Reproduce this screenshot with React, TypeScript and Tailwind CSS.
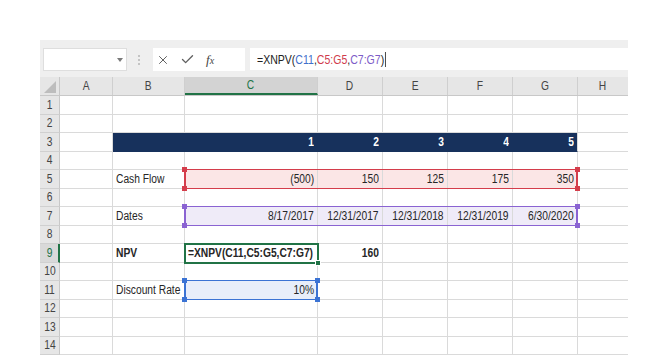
import React from 'react';
import { X, Check } from 'lucide-react';

const COLS = [53, 72, 133, 65, 65, 65, 65, 50];
const LETTERS = ['A', 'B', 'C', 'D', 'E', 'F', 'G', 'H'];
const ROWH = [19, 18, 19, 18, 19, 18, 19, 18, 19, 18, 19, 18, 19, 18];

type Cell = { t?: string; align?: 'l' | 'r'; bold?: boolean; bg?: string; color?: string };

const cells: Record<string, Cell> = {};
const set = (r: number, c: number, v: Cell) => {
  cells[`${r},${c}`] = v;
};

for (let c = 1; c <= 6; c++) set(3, c, { bg: 'bg-[#17315c]', color: 'text-white', bold: true, align: 'r', t: c >= 2 ? String(c - 1) : '' });
set(5, 1, { t: 'Cash Flow' });
['(500)', '150', '125', '175', '350'].forEach((v, i) => set(5, 2 + i, { t: v, align: 'r', bg: 'bg-[#fbe6e6]' }));
set(7, 1, { t: 'Dates' });
['8/17/2017', '12/31/2017', '12/31/2018', '12/31/2019', '6/30/2020'].forEach((v, i) =>
  set(7, 2 + i, { t: v, align: 'r', bg: 'bg-[#efebf8]' })
);
set(9, 1, { t: 'NPV', bold: true });
set(9, 2, { t: '=XNPV(C11,C5:G5,C7:G7)', bold: true });
set(9, 3, { t: '160', bold: true, align: 'r' });
set(11, 1, { t: 'Discount Rate' });
set(11, 2, { t: '10%', align: 'r', bg: 'bg-[#e8eefa]' });

const FONT = "font-['Liberation_Sans',Arial,sans-serif]";

const colLeft = (c: number) => 20 + COLS.slice(0, c).reduce((a, b) => a + b, 0);
const rowTop = (r: number) => ROWH.slice(0, r - 1).reduce((a, b) => a + b, 0);

function N({ children, right, center }: { children: React.ReactNode; right?: boolean; center?: boolean }) {
  return (
    <span
      className={`inline-block whitespace-nowrap scale-x-[0.82] ${
        center ? 'origin-center' : right ? 'origin-right' : 'origin-left'
      }`}
    >
      {children}
    </span>
  );
}

function RangeBox({ r, c1, c2, color }: { r: number; c1: number; c2: number; color: string }) {
  const left = colLeft(c1) - 1;
  const top = rowTop(r) - 1;
  const w = COLS.slice(c1, c2 + 1).reduce((a, b) => a + b, 0) + 1;
  const h = ROWH[r - 1] + 1;
  const handle = (x: number, y: number) => (
    <div className="absolute w-[5px] h-[5px]" style={{ left: x - 2, top: y - 2, background: color }} />
  );
  return (
    <div className="absolute pointer-events-none" style={{ left, top, width: w, height: h }}>
      <div
        className="absolute inset-0"
        style={{
          borderTop: `1px solid ${color}`,
          borderBottom: `1px solid ${color}`,
          borderLeft: `2px solid ${color}`,
          borderRight: `2px solid ${color}`,
        }}
      />
      {handle(0, 0)}
      {handle(w - 1, 0)}
      {handle(0, h - 1)}
      {handle(w - 1, h - 1)}
    </div>
  );
}

export default function App() {
  return (
    <div className={`w-[669px] h-[361px] bg-white overflow-hidden ${FONT}`}>
      <div className="pt-[40px] pl-[40px]">
        <div className="w-[588px]">
          {/* toolbar */}
          <div className="h-[37px] bg-[#efefef] flex items-start pt-[8px]">
            <div className="ml-[3px] w-[84px] h-[23px] bg-white border border-[#dedede] relative">
              <div className="absolute left-[73px] top-[9px] w-0 h-0 border-l-[3px] border-r-[3px] border-t-[4px] border-l-transparent border-r-transparent border-t-[#7a7a7a]" />
            </div>
            <div className="ml-[10px] w-[3px] h-[23px] flex flex-col items-center justify-center gap-[2px]">
              <div className="w-[2px] h-[2px] bg-[#c4c4c4]" />
              <div className="w-[2px] h-[2px] bg-[#c4c4c4]" />
              <div className="w-[2px] h-[2px] bg-[#c4c4c4]" />
            </div>
            <div className="ml-[13px] w-[92px] h-[23px] bg-white flex items-center">
              <X size={14} strokeWidth={1.7} color="#606060" className="ml-[3px]" />
              <Check size={15} strokeWidth={2.2} color="#606060" className="ml-[10px]" />
              <span className="ml-[11px] text-[13px] italic text-[#444] font-['Liberation_Serif',serif] leading-none">
                f<span className="text-[10px]">x</span>
              </span>
            </div>
            <div className="ml-[5px] flex-1 h-[22px] bg-white flex items-center pl-[7px] text-[13px] text-[#222] leading-none">
              <span className="inline-flex items-center whitespace-nowrap scale-x-[0.81] origin-left">
                <span>=XNPV(</span>
                <span className="text-[#3f6fcb]">C11</span>
                <span>,</span>
                <span className="text-[#d03c4c]">C5:G5</span>
                <span>,</span>
                <span className="text-[#7d5cc8]">C7:G7</span>
                <span>)</span>
                <span className="ml-[1px] w-px h-[15px] bg-[#222]" />
              </span>
            </div>
          </div>

          {/* column header */}
          <div className="flex h-[19px] bg-[#e6e6e6] border-b border-[#c8c8c8] text-[12.5px] text-[#444]">
            <div className="w-[20px] h-full relative border-r border-[#c8c8c8]">
              <svg width="20" height="19" className="absolute left-0 top-0">
                <polygon points="16,4 16,16 4,16" fill="#bdbdbd" />
              </svg>
            </div>
            {LETTERS.map((l, i) => (
              <div
                key={l}
                className={`h-full flex items-center justify-center ${i < 7 ? 'border-r border-[#cfcfcf]' : ''} ${
                  i === 2 ? 'bg-[#d3d3d3] text-[#217346] border-b-2 border-b-[#217346]' : ''
                }`}
                style={{ width: COLS[i] }}
              >
                <N center>{l}</N>
              </div>
            ))}
          </div>

          {/* grid */}
          <div className="relative">
            {ROWH.map((h, ri) => {
              const r = ri + 1;
              return (
                <div key={r} className="flex" style={{ height: h }}>
                  <div
                    className={`w-[20px] h-full flex items-center justify-center text-[12.5px] border-b border-[#d0d0d0] ${
                      r === 9
                        ? 'bg-[#d9d9d9] text-[#217346] border-r-2 border-r-[#217346]'
                        : 'bg-[#e6e6e6] text-[#444] border-r border-r-[#c8c8c8]'
                    }`}
                  >
                    <N center>{r}</N>
                  </div>
                  {COLS.map((w, ci) => {
                    const cell = cells[`${r},${ci}`] || {};
                    const navy = cell.bg === 'bg-[#17315c]';
                    return (
                      <div
                        key={ci}
                        className={`h-full flex items-center px-[3px] text-[12.5px] whitespace-nowrap overflow-visible ${
                          navy ? 'border-b border-[#17315c]' : 'border-b border-[#dadada]'
                        } ${ci < 7 ? (navy && ci < 6 ? 'border-r border-r-[#17315c]' : 'border-r border-r-[#dadada]') : ''} ${
                          cell.bg || 'bg-white'
                        } ${cell.color || 'text-[#262626]'} ${cell.bold ? 'font-bold' : ''} ${
                          cell.align === 'r' ? 'justify-end' : 'justify-start'
                        }`}
                        style={{ width: w }}
                      >
                        {cell.t ? <N right={cell.align === 'r'}>{cell.t}</N> : null}
                      </div>
                    );
                  })}
                </div>
              );
            })}

            <RangeBox r={5} c1={2} c2={6} color="#d43d4b" />
            <RangeBox r={7} c1={2} c2={6} color="#8a63d2" />
            <RangeBox r={11} c1={2} c2={2} color="#3b73d4" />

            {/* active cell C9 */}
            <div
              className="absolute border-2 border-[#217346] pointer-events-none"
              style={{ left: colLeft(2) - 1, top: rowTop(9) - 1, width: COLS[2] + 2, height: ROWH[8] + 2 }}
            />
            <div
              className="absolute w-[6px] h-[6px] bg-[#217346] border border-white"
              style={{ left: colLeft(2) + COLS[2] - 3, top: rowTop(9) + ROWH[8] - 3 }}
            />
          </div>
        </div>
      </div>
    </div>
  );
}
